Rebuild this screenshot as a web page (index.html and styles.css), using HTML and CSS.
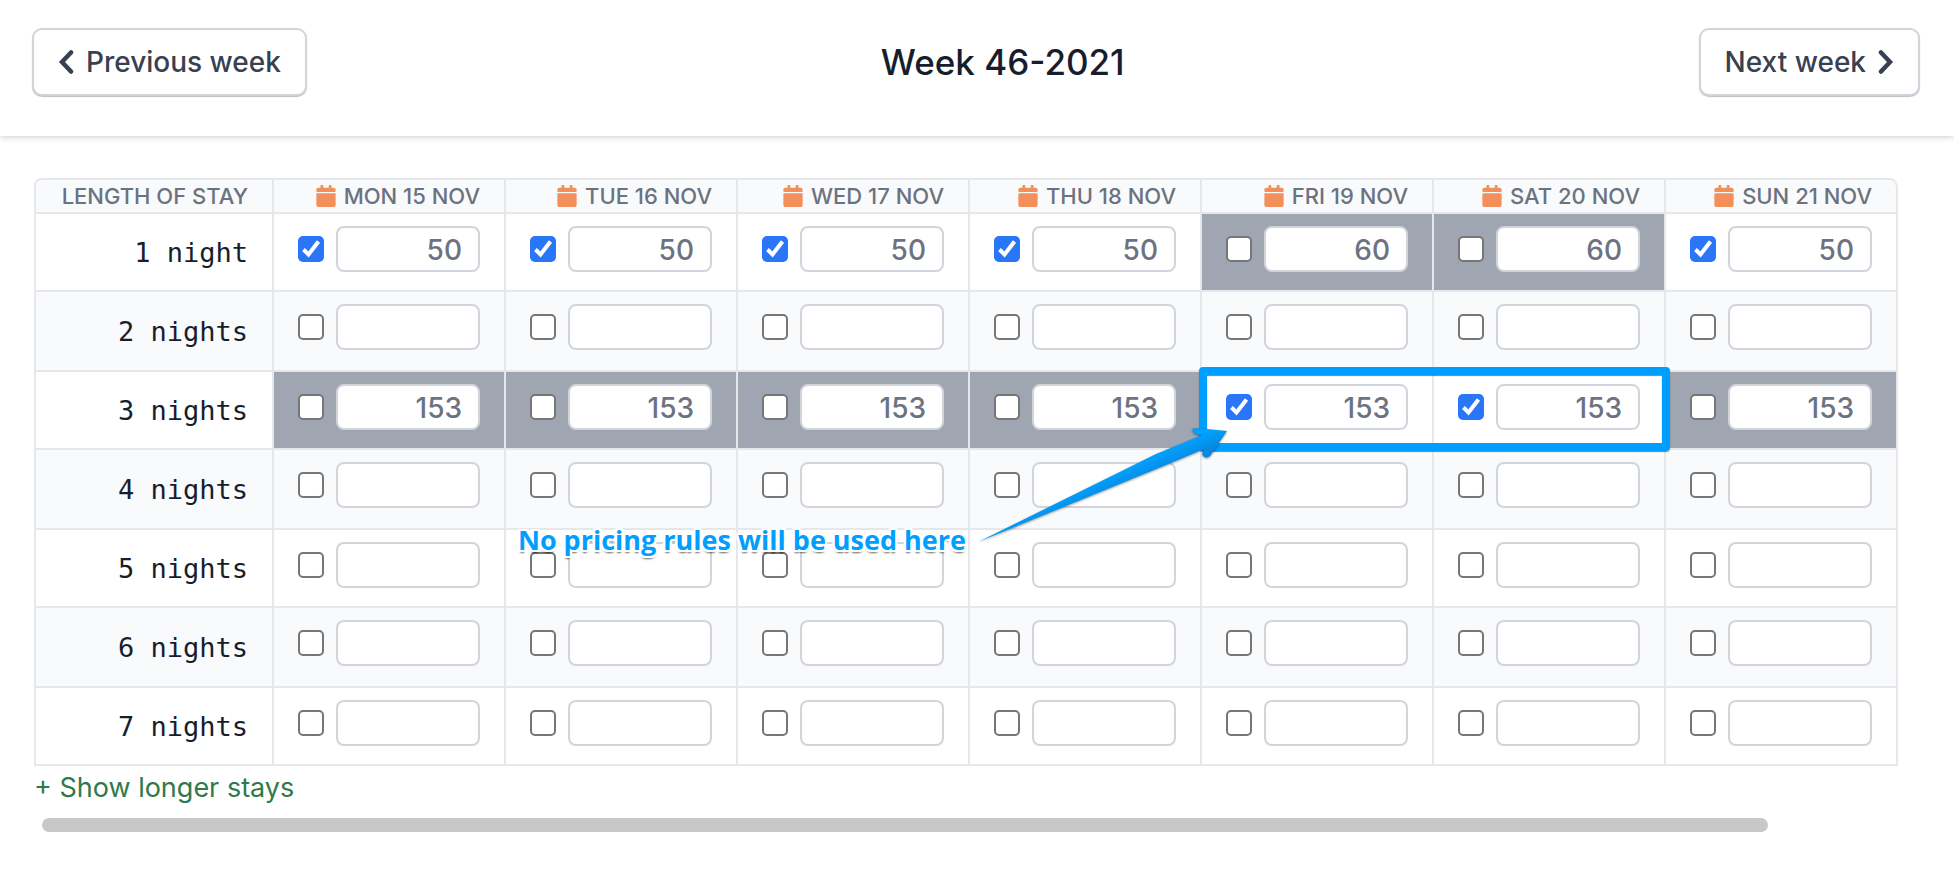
FILE: index.html
```
<!DOCTYPE html>
<html lang="en">
<head>
    <meta charset="UTF-8">
    <meta name="viewport" content="width=device-width, initial-scale=1.0">
    <title>Week 46-2021</title>
    <link rel="stylesheet" href="styles.css">
</head>
<body>
    <header class="week-nav">
        <button type="button" class="nav-button">
            <svg class="chevron" viewBox="0 0 16 24" aria-hidden="true"><path d="M13 2.5 4 12l9 9.5"/></svg>
            Previous week
        </button>
        <h1>Week 46-2021</h1>
        <button type="button" class="nav-button">
            Next week
            <svg class="chevron" viewBox="0 0 16 24" aria-hidden="true"><path d="M3 2.5 12 12l-9 9.5"/></svg>
        </button>
    </header>

    <main class="prices">
        <table class="price-table">
            <thead>
                <tr id="days"><th class="stay-col">Length of stay</th></tr>
            </thead>
            <tbody id="stays"></tbody>
        </table>
        <a class="show-more" href="#">+ Show longer stays</a>
        <div class="scroll-track"><div class="scroll-thumb"></div></div>
    </main>

    <template id="calendar-icon">
        <svg class="calendar" viewBox="0 0 448 512" aria-hidden="true"><path d="M12 192h424c6.6 0 12 5.4 12 12v260c0 26.5-21.5 48-48 48H48c-26.5 0-48-21.5-48-48V204c0-6.6 5.4-12 12-12zm436-44v-36c0-26.5-21.5-48-48-48h-48V12c0-6.6-5.4-12-12-12h-40c-6.6 0-12 5.4-12 12v52H160V12c0-6.6-5.4-12-12-12h-40c-6.6 0-12 5.4-12 12v52H48C21.5 64 0 85.5 0 112v36c0 6.6 5.4 12 12 12h424c6.6 0 12-5.4 12-12z"/></svg>
    </template>

    <template id="note">
        <div class="highlight"></div>
        <div class="note">
            <span class="note-text">No pricing rules will be used here</span>
            <svg class="arrow" viewBox="0 0 254 134" aria-hidden="true">
                <defs>
                    <linearGradient id="arrow-fill" gradientUnits="userSpaceOnUse" x1="180" y1="28" x2="188" y2="46">
                        <stop offset="0" stop-color="#00a2ff"/>
                        <stop offset="1" stop-color="#0a86dd"/>
                    </linearGradient>
                </defs>
                <path d="M2 116 L180 28 L226 9 L219 8 Q213 2 220 2 L251 5 L234 30 Q229 34 226 28 L228 23 L190 39 Z"/>
            </svg>
        </div>
    </template>

    <script>
        const days = ["Mon 15 Nov", "Tue 16 Nov", "Wed 17 Nov", "Thu 18 Nov", "Fri 19 Nov", "Sat 20 Nov", "Sun 21 Nov"];

        // prices per day, and the days on which the stay can be booked
        const stays = [
            { prices: [50, 50, 50, 50, 60, 60, 50], open: [0, 1, 2, 3, 6] },
            {},
            { prices: [153, 153, 153, 153, 153, 153, 153], open: [4, 5] },
            {}, {}, {}, {}
        ];

        const icon = document.getElementById("calendar-icon").innerHTML.trim();

        days.forEach(day => {
            const th = document.createElement("th");
            th.innerHTML = icon + day;
            document.getElementById("days").appendChild(th);
        });

        stays.forEach((stay, i) => {
            const label = (i + 1) + (i === 0 ? " night" : " nights");
            const row = document.createElement("tr");
            row.innerHTML = `<th class="stay">${label}</th>`;

            days.forEach((day, d) => {
                const price = stay.prices ? stay.prices[d] : "";
                const open = stay.open ? stay.open.includes(d) : false;
                const cell = document.createElement("td");
                if (price && !open) cell.className = "closed";
                cell.innerHTML = `<div class="cell">
                    <input type="checkbox" class="check" aria-label="${label}, ${day}" ${open ? "checked" : ""}>
                    <input type="text" class="price" aria-label="Price for ${label}, ${day}" value="${price}">
                </div>`;
                row.appendChild(cell);
            });
            document.getElementById("stays").appendChild(row);
        });

        // the note points at Friday and Saturday, 3 nights
        const noted = document.getElementById("stays").rows[2].cells[5];
        noted.classList.add("noted");
        noted.appendChild(document.getElementById("note").content.cloneNode(true));
    </script>
</body>
</html>
```
FILE: styles.css
```
:root {
    --line: #e5e7eb;
    --input-line: #d1d5db;
    --muted: #6b7280;
    --dark: #374151;
    --ink: #161e2e;
    --stripe: #f9fafb;
    --closed: #9fa5b1;
    --note: #009eff;
}

* {
    box-sizing: border-box;
}

body {
    margin: 0;
    background: white;
    color: var(--ink);
    font-family: Inter, "Liberation Sans", sans-serif;
    font-size: 27px;
}

.week-nav {
    display: flex;
    justify-content: space-between;
    align-items: center;
    padding: 28px 34px 40px 32px;
    box-shadow: 0 1px 6px rgba(0, 0, 0, 0.2);
}

.week-nav h1 {
    margin: 0;
    font-size: 35px;
    font-weight: 500;
    line-height: 40px;
}

.nav-button {
    display: flex;
    align-items: center;
    gap: 12px;
    height: 68px;
    padding: 0 24px;
    background: white;
    border: 2px solid var(--input-line);
    border-radius: 10px;
    box-shadow: 0 1px 1px rgba(0, 0, 0, 0.25);
    color: var(--dark);
    font-family: inherit;
    font-size: 28px;
    font-weight: 500;
    cursor: pointer;
}

.chevron {
    width: 16px;
    height: 24px;
    fill: none;
    stroke: currentColor;
    stroke-width: 4.5;
    stroke-linecap: round;
}

.prices {
    padding: 42px 56px 38px 34px;
}

.price-table {
    width: 100%;
    table-layout: fixed;
    border-collapse: separate;
    border-spacing: 0;
    border: solid var(--line);
    border-width: 2px 0 0 2px;
    border-radius: 8px 8px 0 0;
}

.price-table th,
.price-table td {
    border: solid var(--line);
    border-width: 0 2px 2px 0;
    padding: 0 24px;
    text-align: right;
}

.price-table thead th {
    height: 34px;
    background: var(--stripe);
    color: var(--muted);
    font-size: 22px;
    font-weight: 500;
    line-height: 32px;
    text-transform: uppercase;
    white-space: nowrap;
}

.price-table thead th:first-child {
    border-top-left-radius: 6px;
}

.price-table thead th:last-child {
    border-top-right-radius: 8px;
}

.price-table .stay-col {
    width: 238px;
}

.calendar {
    width: 20px;
    height: 22px;
    margin-right: 8px;
    vertical-align: -3px;
    fill: #f28f5b;
}

.price-table tbody tr {
    height: 78px;
}

.price-table tbody tr:nth-child(even) {
    height: 80px;
    background: var(--stripe);
}

.price-table .stay {
    padding-top: 1px;
    font-family: "DejaVu Sans Mono", "Liberation Mono", monospace;
    font-size: 27px;
    font-weight: 400;
    line-height: 40px;
    white-space: nowrap;
}

.price-table td {
    padding-top: 12px;
    vertical-align: top;
}

.price-table .closed {
    background: var(--closed);
}

.cell {
    display: flex;
    gap: 12px;
}

.check {
    appearance: none;
    flex: none;
    width: 26px;
    height: 26px;
    margin: 10px 0;
    background: white;
    border: 2px solid #767676;
    border-radius: 5px;
}

.check:checked {
    border: none;
    background: #2a76f8 url("data:image/svg+xml,%3Csvg xmlns='http://www.w3.org/2000/svg' viewBox='0 0 26 26'%3E%3Cpath d='M5.5 13.5 10.5 18.5 20.5 5.5' fill='none' stroke='white' stroke-width='4'/%3E%3C/svg%3E");
}

.price {
    flex: 1;
    min-width: 0;
    height: 46px;
    padding: 2px 16px 0;
    background: white;
    border: 2px solid var(--input-line);
    border-radius: 8px;
    color: var(--muted);
    font-family: inherit;
    font-size: 28px;
    font-weight: 500;
    text-align: right;
}

.noted {
    position: relative;
}

.highlight {
    position: absolute;
    z-index: 1;
    top: -5px;
    bottom: -3px;
    left: -3px;
    width: calc(200% + 11px);
    border: 8px solid var(--note);
    border-radius: 4px;
    box-shadow: 0 1px 1px rgba(0, 0, 0, 0.5), inset 0 1px 1px rgba(0, 0, 0, 0.5);
    pointer-events: none;
}

.note {
    position: absolute;
    z-index: 2;
    top: 54px;
    right: calc(100% - 28px);
    display: flex;
    align-items: flex-end;
    gap: 10px;
    pointer-events: none;
}

.note-text {
    margin-bottom: 2px;
    color: var(--note);
    font-family: "Open Sans", "Noto Sans", sans-serif;
    font-size: 27px;
    font-weight: 700;
    line-height: 36px;
    white-space: nowrap;
    text-shadow: -2px 0 white, 2px 0 white, 0 -2px white, 0 2px white,
        -2px -2px white, 2px -2px white, -2px 2px white, 2px 2px white,
        0 3px 2px rgba(0, 0, 0, 0.6);
}

.arrow {
    width: 254px;
    height: 134px;
    fill: url(#arrow-fill);
    filter: drop-shadow(0 1px 1px rgba(0, 0, 0, 0.4));
}

.show-more {
    display: inline-block;
    margin-top: 4px;
    color: #2f7a4b;
    line-height: 36px;
    text-decoration: none;
}

.scroll-track {
    margin-top: 12px;
    padding-left: 8px;
}

.scroll-thumb {
    width: 93%;
    height: 14px;
    background: #c8c8c8;
    border-radius: 8px;
}
```
